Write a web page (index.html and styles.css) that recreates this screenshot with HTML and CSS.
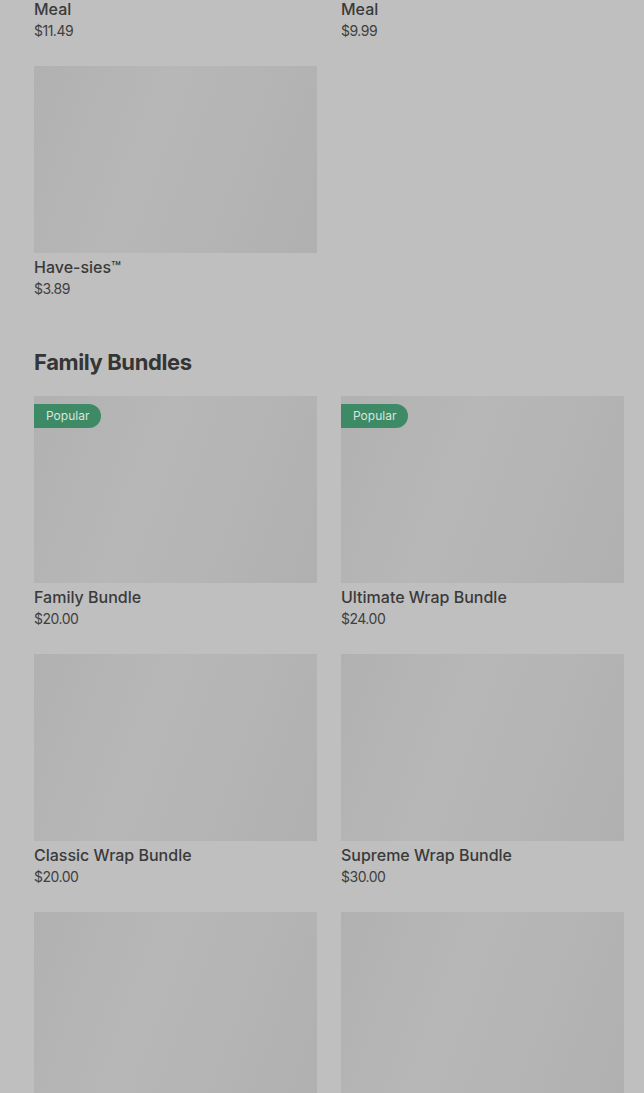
FILE: index.html
```html
<!DOCTYPE html>
<html lang="en">
<head>
    <meta charset="UTF-8">
    <meta name="viewport" content="width=device-width, initial-scale=1.0">
    <title>Menu</title>
    <link rel="stylesheet" href="styles.css">
</head>
<body>
    <div class="menu">
        <!-- Meals -->
        <section class="menu-section">
            <div class="grid">
                <div class="item">
                    <div class="thumb"></div>
                    <p class="item-name">Spicy Deluxe Chicken Sandwich<br>Meal</p>
                    <p class="item-price">$11.49</p>
                </div>
                <div class="item">
                    <div class="thumb"></div>
                    <p class="item-name">Grilled Chicken Club Sandwich<br>Meal</p>
                    <p class="item-price">$9.99</p>
                </div>
                <div class="item">
                    <div class="thumb"></div>
                    <p class="item-name">Have-sies™</p>
                    <p class="item-price">$3.89</p>
                </div>
            </div>
        </section>

        <!-- Family Bundles -->
        <section class="menu-section">
            <h2 class="section-title">Family Bundles</h2>
            <div class="grid">
                <div class="item">
                    <div class="thumb">
                        <span class="badge">Popular</span>
                    </div>
                    <p class="item-name">Family Bundle</p>
                    <p class="item-price">$20.00</p>
                </div>
                <div class="item">
                    <div class="thumb">
                        <span class="badge">Popular</span>
                    </div>
                    <p class="item-name">Ultimate Wrap Bundle</p>
                    <p class="item-price">$24.00</p>
                </div>
                <div class="item">
                    <div class="thumb"></div>
                    <p class="item-name">Classic Wrap Bundle</p>
                    <p class="item-price">$20.00</p>
                </div>
                <div class="item">
                    <div class="thumb"></div>
                    <p class="item-name">Supreme Wrap Bundle</p>
                    <p class="item-price">$30.00</p>
                </div>
                <div class="item">
                    <div class="thumb"></div>
                </div>
                <div class="item">
                    <div class="thumb"></div>
                </div>
            </div>
        </section>
    </div>
</body>
</html>
```

FILE: styles.css
```css
/* General */
body {
    margin: 0;
    background-color: #bfbfbf;
    font-family: Inter, "Noto Sans", sans-serif;
    color: #3a3a3a;
    overflow: hidden;
}

/* the page is scrolled part way down the menu */
.menu {
    margin-top: -216px;
    padding: 0 20px 0 34px;
}

.menu-section {
    margin-bottom: 49px;
}

.section-title {
    margin: 0 0 20px;
    font-size: 22px;
    line-height: 28px;
    font-weight: 700;
    letter-spacing: -0.4px;
    color: #353535;
}

.grid {
    display: grid;
    grid-template-columns: 1fr 1fr;
    column-gap: 24px;
    row-gap: 25px;
}

.item-name {
    margin: 2px 0 0;
    font-size: 16px;
    line-height: 24px;
    font-weight: 500;
    color: #3a3a3a;
}

.item-price {
    margin: 0;
    font-size: 14px;
    line-height: 20px;
    letter-spacing: -0.5px;
    color: #404040;
}

/* Image placeholders (loading shimmer) */
.thumb {
    position: relative;
    height: 187px;
    background: linear-gradient(110deg, #b1b1b1 0%, #b7b7b7 40%, #b4b4b4 70%, #b0b0b0 100%);
}

.badge {
    position: absolute;
    top: 8px;
    left: 0;
    padding: 0 12px;
    height: 24px;
    line-height: 24px;
    font-size: 12px;
    color: #d8e6de;
    background-color: #3e8a66;
    border-radius: 0 12px 12px 0;
}
```
